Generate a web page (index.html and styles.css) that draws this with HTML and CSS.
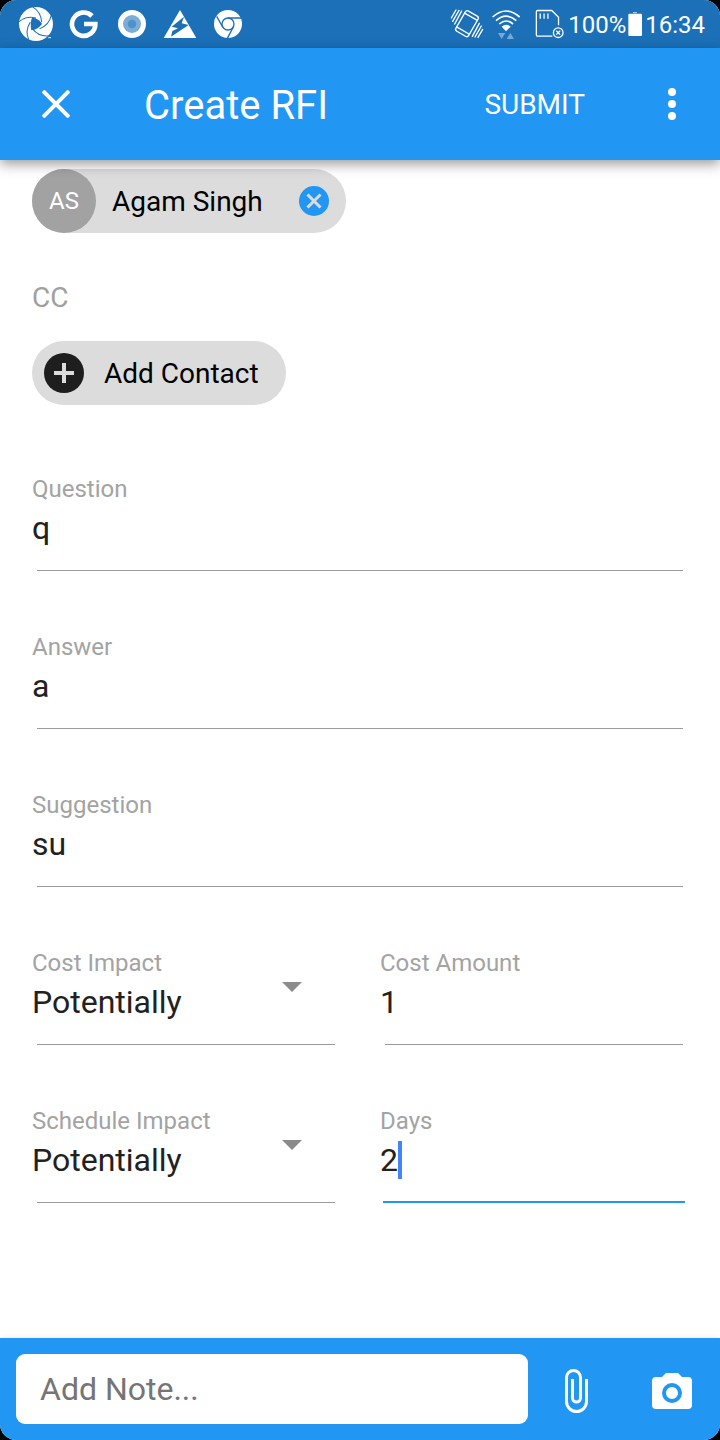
FILE: index.html
```html
<!DOCTYPE html>
<html lang="en">
<head>
<meta charset="utf-8">
<meta name="viewport" content="width=device-width, initial-scale=1">
<title>Create RFI</title>
<link rel="stylesheet" href="styles.css">
</head>
<body>
<div class="app">
  <div class="status">
    <div class="status-apps">
      <svg class="status-icon" viewBox="54 18 108 108" aria-hidden="true">
        <circle cx="108" cy="72" r="51" fill="#fff"/>
        <path d="M94 91C91 76 92 62 96 53C110 53 121 62 126 72C118 83 106 90 94 91Z" fill="#1b70b8"/>
        <g fill="none" stroke="#1b70b8" stroke-width="3">
          <path d="M108 54Q78 46 56 66"/>
          <path d="M108 54Q78 46 56 66" transform="rotate(72 108 72)"/>
          <path d="M108 54Q78 46 56 66" transform="rotate(144 108 72)"/>
          <path d="M108 54Q78 46 56 66" transform="rotate(216 108 72)"/>
          <path d="M108 54Q78 46 56 66" transform="rotate(288 108 72)"/>
        </g>
        <path d="M145 113H153" stroke="#fff" stroke-width="3"/>
      </svg>
      <svg class="status-icon" viewBox="198 18 108 108" aria-hidden="true">
        <path d="M276 48A35 35 0 1 0 286 72H252" fill="none" stroke="#fff" stroke-width="14"/>
      </svg>
      <svg class="status-icon" viewBox="342 18 108 108" aria-hidden="true">
        <circle cx="396" cy="72" r="42" fill="#fff"/>
        <circle cx="396" cy="72" r="27" fill="#7dadd7"/>
        <circle cx="396" cy="72" r="13" fill="#4c93cb"/>
      </svg>
      <svg class="status-icon" viewBox="486 18 108 108" aria-hidden="true">
        <path d="M540 30L589 114H491Z" fill="#fff"/>
        <path d="M552 50L515 80L534 85L517 93L513 110L566 75L545 70Z" fill="#1b70b8"/>
      </svg>
      <svg class="status-icon" viewBox="630 18 108 108" aria-hidden="true">
        <circle cx="684" cy="72" r="42" fill="#fff"/>
        <g fill="none" stroke="#1b70b8" stroke-width="4">
          <circle cx="684" cy="72" r="18"/>
          <path d="M684 54H724M668 81L650 49M700 81L682 115"/>
        </g>
      </svg>
    </div>
    <div class="status-system">
      <svg class="status-icon" viewBox="24 18 108 108" aria-hidden="true">
        <g fill="none" stroke="#fff" stroke-width="4" stroke-linecap="round">
          <g transform="rotate(30 81 71)">
            <rect x="59" y="36" width="44" height="70" rx="7"/>
            <path d="M59 47H103M59 95H103"/>
          </g>
          <path d="M48 30L34 54M57 31L38 64M65 33L44 72M114 112L128 88M105 111L124 78M97 109L118 70"/>
        </g>
      </svg>
      <svg class="status-icon" viewBox="144 18 108 108" aria-hidden="true">
        <g fill="none" stroke="#fff" stroke-width="5">
          <path d="M158 51Q198 15 239 51M168 62Q198 35 229 62M178 72Q198 54 219 72"/>
        </g>
        <path d="M185 80Q198 68 212 80L198 94Z" fill="#fff"/>
        <path d="M174 99H196L185 117ZM211 99L222 117H200Z" fill="#76a9d4"/>
      </svg>
      <svg class="status-icon" viewBox="264 18 112 108" aria-hidden="true">
        <g fill="none" stroke="#fff" stroke-width="4">
          <path d="M340 110H294Q290 110 290 106V34Q290 30 294 30H338L359 51V76"/>
          <path d="M302 39V56M314 39V56M326 39V56"/>
          <circle cx="358" cy="99" r="15"/>
          <path d="M352 93L364 105M364 93L352 105"/>
        </g>
      </svg>
      <div class="status-text">
        <span>100%</span>
        <svg class="battery" viewBox="561 18 57 108" aria-hidden="true">
          <path d="M582 36H594V40H582Z" fill="#a9cae5"/>
          <rect x="568" y="41" width="41" height="67" rx="3" fill="#fff"/>
        </svg>
        <time>16:34</time>
      </div>
    </div>
  </div>

  <header class="bar">
    <button class="bar-close" type="button" aria-label="Close">
      <svg class="icon-close" viewBox="0 0 28 28" aria-hidden="true"><path d="M1 1L27 27M27 1L1 27" stroke="#fff" stroke-width="4" fill="none"/></svg>
    </button>
    <h1 class="bar-title">Create RFI</h1>
    <button class="bar-submit" type="submit" form="rfi">SUBMIT</button>
    <button class="icon-button" type="button" aria-label="More options">
      <svg class="icon-more" viewBox="0 0 8 32" aria-hidden="true"><g fill="#fff"><circle cx="4" cy="4" r="4"/><circle cx="4" cy="16" r="4"/><circle cx="4" cy="28" r="4"/></g></svg>
    </button>
  </header>

  <form class="form" id="rfi">
    <div class="chip">
      <span class="avatar">AS</span>
      <span class="chip-name">Agam Singh</span>
      <button class="chip-remove" type="button" aria-label="Remove Agam Singh">
        <svg class="icon-remove" viewBox="0 0 30 30" aria-hidden="true"><circle cx="15" cy="15" r="15" fill="#2196f3"/><path d="M8.500 8.500L21.500 21.500M21.500 8.500L8.500 21.500" stroke="#dcdcdc" stroke-width="3"/></svg>
      </button>
    </div>
    <h2 class="section">CC</h2>
    <button class="chip chip-add" type="button">
      <svg class="icon-add" viewBox="0 0 40 40" aria-hidden="true"><circle cx="20" cy="20" r="20" fill="#1e1e1e"/><path d="M20 10V30M10 20H30" stroke="#dcdcdc" stroke-width="4"/></svg>
      <span class="chip-text">Add Contact</span>
    </button>

    <div class="fields">
      <div class="field wide">
        <label class="label" for="question">Question</label>
        <input class="value" id="question" type="text" value="q">
      </div>
      <div class="field wide">
        <label class="label" for="answer">Answer</label>
        <input class="value" id="answer" type="text" value="a">
      </div>
      <div class="field wide">
        <label class="label" for="suggestion">Suggestion</label>
        <input class="value" id="suggestion" type="text" value="su">
      </div>
      <div class="field choice">
        <label class="label" for="cost-impact">Cost Impact</label>
        <select class="value" id="cost-impact"><option>Potentially</option><option>Yes</option><option>No</option></select>
      </div>
      <div class="field">
        <label class="label" for="cost-amount">Cost Amount</label>
        <input class="value" id="cost-amount" type="text" inputmode="decimal" value="1">
      </div>
      <div class="field choice">
        <label class="label" for="schedule-impact">Schedule Impact</label>
        <select class="value" id="schedule-impact"><option>Potentially</option><option>Yes</option><option>No</option></select>
      </div>
      <div class="field active">
        <label class="label" for="days">Days</label>
        <div class="entry">
          <input class="value" id="days" type="text" inputmode="numeric" value="2">
          <span class="caret"></span>
        </div>
      </div>
    </div>
  </form>

  <footer class="note">
    <input class="note-input" type="text" placeholder="Add Note..." aria-label="Add Note">
    <button class="icon-button" type="button" aria-label="Attach file">
      <svg class="icon-clip" viewBox="0 0 24 46" aria-hidden="true"><path d="M22.500 11V33.500A10 10 0 0 1 2.500 33.500V9.500A7 7 0 0 1 16.500 9.500V30A4 4 0 0 1 8.500 30V11" fill="none" stroke="#fff" stroke-width="3"/></svg>
    </button>
    <button class="icon-button" type="button" aria-label="Take photo">
      <svg class="icon-camera" viewBox="0 0 40 36" aria-hidden="true"><path d="M4 4H10L14 0H26L30 4H36A4 4 0 0 1 40 8V32A4 4 0 0 1 36 36H4A4 4 0 0 1 0 32V8A4 4 0 0 1 4 4Z" fill="#fff"/><circle cx="20" cy="20" r="8" fill="#fff" stroke="#2196f3" stroke-width="4"/></svg>
    </button>
  </footer>
</div>
</body>
</html>
```
FILE: styles.css
```css
* {
  box-sizing: border-box;
}

body {
  margin: 0;
  background: #000;
  font-family: Roboto, "Liberation Sans", sans-serif;
  color: #212121;
}

button,
input,
select {
  margin: 0;
  padding: 0;
  border: 0;
  outline: 0;
  background: none;
  color: inherit;
  font: inherit;
}

svg {
  display: block;
  flex: none;
}

.app {
  display: flex;
  flex-direction: column;
  min-height: 100vh;
  overflow: hidden;
  border-radius: 16px;
  background: #fff;
}

/* System status bar */
.status {
  display: flex;
  justify-content: space-between;
  align-items: center;
  height: 48px;
  padding: 0 15px 0 18px;
  background: #1b70b8;
  color: #fff;
}

.status-apps {
  display: flex;
  gap: 12px;
}

.status-system {
  display: flex;
  align-items: center;
  gap: 4px;
}

.status-icon {
  width: 36px;
  height: 36px;
}

.status-text {
  display: flex;
  align-items: center;
  font-size: 24px;
  line-height: 28px;
}

.status-text span,
.status-text time {
  padding-top: 2px;
}

.battery {
  width: 19px;
  height: 36px;
}

/* App bar */
.bar {
  display: flex;
  align-items: center;
  height: 112px;
  background: #2196f3;
  color: #fff;
  box-shadow: 0 4px 12px rgba(0, 0, 0, 0.4);
  z-index: 1;
}

.bar-close {
  display: grid;
  place-items: center;
  width: 112px;
  height: 112px;
}

.icon-close {
  width: 28px;
  height: 28px;
}

.bar-title {
  flex: 1;
  margin: 0;
  padding: 3px 0 0 32px;
  font-size: 40px;
  font-weight: 400;
  line-height: 48px;
}

.bar-submit {
  padding: 2px 39px 0;
  font-size: 28px;
  line-height: 48px;
}

.icon-button {
  display: grid;
  place-items: center;
  flex: none;
  width: 96px;
  height: 70px;
}

.icon-more {
  width: 8px;
  height: 32px;
}

/* Form */
.form {
  display: flex;
  flex-direction: column;
  align-items: flex-start;
  flex: 1;
  padding: 9px 32px 32px;
}

.chip {
  display: flex;
  align-items: center;
  height: 64px;
  border-radius: 32px;
  background: #dcdcdc;
  color: #000;
  font-size: 28px;
  line-height: 32px;
}

.avatar {
  display: grid;
  place-items: center;
  width: 64px;
  height: 64px;
  border-radius: 50%;
  background: #a2a2a2;
  color: #fff;
  font-size: 24px;
}

.chip-name {
  padding: 2px 19px 0 16px;
}

.chip-remove {
  display: grid;
  place-items: center;
  width: 64px;
  height: 64px;
}

.icon-remove {
  width: 30px;
  height: 30px;
}

.section {
  margin: 49px 0 27px;
  color: #a0a0a0;
  font-size: 28px;
  font-weight: 400;
  line-height: 32px;
}

.chip-add {
  padding-left: 12px;
}

.chip-text {
  padding: 2px 27px 0 20px;
}

.icon-add {
  width: 40px;
  height: 40px;
}

.fields {
  display: grid;
  grid-template-columns: 1fr 1fr;
  gap: 61px 40px;
  width: 100%;
  margin-top: 69px;
}

.wide {
  grid-column: 1 / -1;
}

.field {
  position: relative;
  display: flex;
  flex-direction: column;
  min-width: 0;
}

.field::after {
  content: "";
  height: 1px;
  margin: 22px 5px 0;
  background: #9b9b9b;
}

.active::after {
  height: 2px;
  margin: 21px 3px 0;
  background: #2196f3;
}

.label {
  margin-bottom: 4px;
  color: #a3a3a3;
  font-size: 24px;
  line-height: 30px;
}

.value {
  width: 100%;
  height: 40px;
  font-size: 32px;
  line-height: 40px;
  appearance: none;
}

.choice::before {
  content: "";
  position: absolute;
  top: 34px;
  right: 38px;
  width: 20px;
  height: 10px;
  background: #8b8b8b;
  clip-path: polygon(0 0, 100% 0, 50% 100%);
  pointer-events: none;
}

.entry {
  display: flex;
  align-items: center;
}

.entry .value {
  width: auto;
  min-width: 18px;
  field-sizing: content;
  caret-color: transparent;
}

.caret {
  width: 4px;
  height: 38px;
  background: #4285f4;
}

/* Note bar */
.note {
  display: flex;
  align-items: center;
  padding: 16px 0 16px 16px;
  background: #2196f3;
  box-shadow: 0 0 6px rgba(0, 0, 0, 0.1);
}

.note .icon-button {
  padding-top: 4px;
}

.note-input {
  flex: 1;
  min-width: 0;
  height: 70px;
  padding: 0 24px;
  border-radius: 9px;
  background: #fff;
  font-size: 32px;
}

.note-input::placeholder {
  color: #757575;
  opacity: 1;
}

.icon-clip {
  width: 24px;
  height: 46px;
}

.icon-camera {
  width: 40px;
  height: 36px;
}
```
